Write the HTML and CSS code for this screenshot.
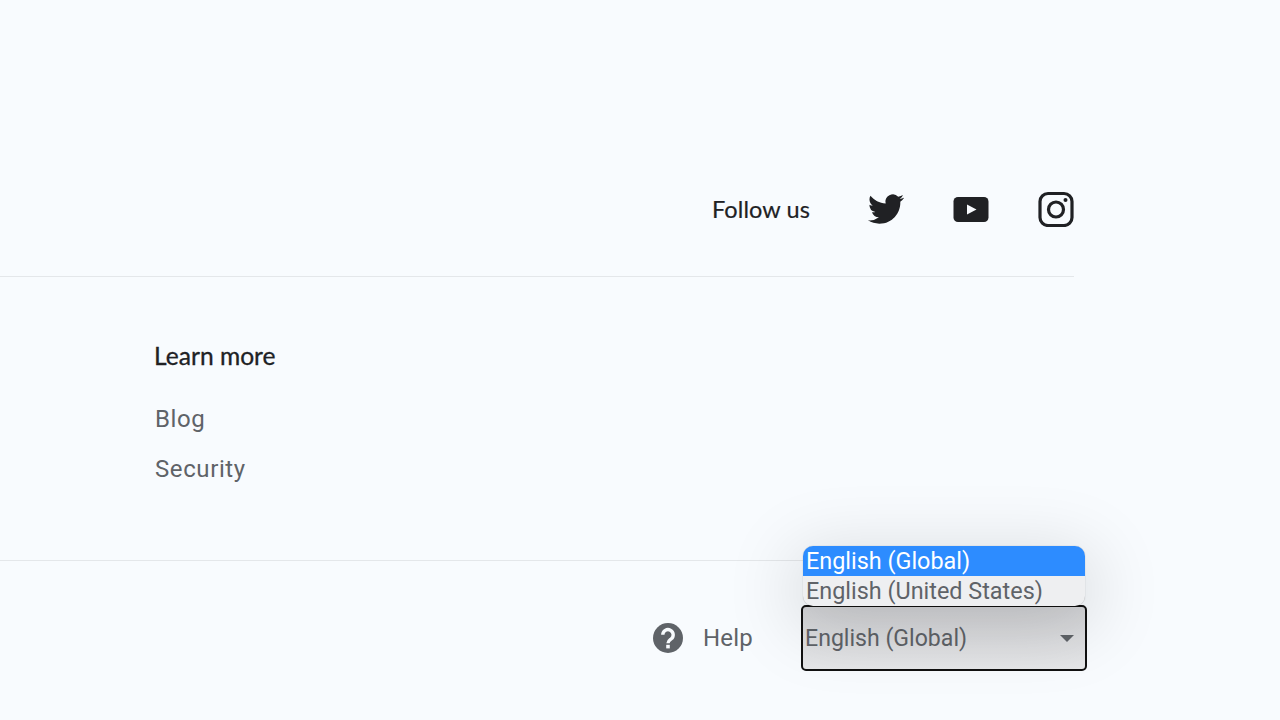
FILE: index.html
```html
<!DOCTYPE html>
<html lang="en">
<head>
    <meta charset="UTF-8">
    <title>Footer</title>
    <link rel="stylesheet" href="styles.css">
</head>
<body>
    <footer class="footer">
        <div class="follow">
            <span class="follow-label">Follow us</span>
            <a class="social" href="#" aria-label="Twitter">
                <svg viewBox="0 0 24 24" width="36" height="36"><path fill="#202124" d="M23.953 4.57a10 10 0 01-2.825.775 4.958 4.958 0 002.163-2.723c-.951.555-2.005.959-3.127 1.184a4.92 4.92 0 00-8.384 4.482C7.69 8.095 4.067 6.13 1.64 3.162a4.822 4.822 0 00-.666 2.475c0 1.71.87 3.213 2.188 4.096a4.904 4.904 0 01-2.228-.616v.06a4.923 4.923 0 003.946 4.827 4.996 4.996 0 01-2.212.085 4.936 4.936 0 004.604 3.417 9.867 9.867 0 01-6.102 2.105c-.39 0-.779-.023-1.17-.067a13.995 13.995 0 007.557 2.209c9.053 0 13.998-7.496 13.998-13.985 0-.21 0-.42-.015-.63A9.935 9.935 0 0024 4.59z"/></svg>
            </a>
            <a class="social" href="#" aria-label="YouTube">
                <svg viewBox="0 0 36 36" width="36" height="36"><rect x="0.5" y="6" width="35" height="25" rx="4.5" fill="#202124"/><path fill="#f8fbfe" d="M14 13.500v10l9.500-5z"/></svg>
            </a>
            <a class="social" href="#" aria-label="Instagram">
                <svg viewBox="0 0 36 36" width="36" height="36" fill="none" stroke="#202124" stroke-width="3.200"><rect x="2" y="2.500" width="32" height="32" rx="8"/><circle cx="18" cy="18.500" r="7.500"/><circle cx="27.500" cy="9" r="2" fill="#202124" stroke="none"/></svg>
            </a>
        </div>

        <div class="links">
            <h3 class="links-title">Learn more</h3>
            <a class="link" href="#">Blog</a>
            <a class="link" href="#">Security</a>
        </div>

        <div class="bottom">
            <a class="help" href="#">
                <svg viewBox="0 0 30 30" width="30" height="30"><circle cx="15" cy="15" r="15" fill="#5f6368"/><path fill="none" stroke="#f8fbfe" stroke-width="3.400" d="M9.800 11.800a5.200 5.200 0 1 1 8.300 4.200c-1.900 1.400-3.100 2-3.100 4.300"/><rect x="13.200" y="21.800" width="3.600" height="3.600" fill="#f8fbfe"/></svg>
                <span>Help</span>
            </a>
            <div class="lang">
                <div class="lang-menu">
                    <div class="lang-option selected">English (Global)</div>
                    <div class="lang-option">English (United States)</div>
                </div>
                <div class="lang-select">
                    <span>English (Global)</span>
                    <span class="arrow"></span>
                </div>
            </div>
        </div>
    </footer>
</body>
</html>
```

FILE: styles.css
```css
* {
    margin: 0;
    padding: 0;
    box-sizing: border-box;
}

html, body {
    height: 100%;
    overflow: hidden;
}

body {
    background: #f8fbfe;
    font-family: Roboto, "Liberation Sans", sans-serif;
    color: #5f6368;
}

a {
    color: inherit;
    text-decoration: none;
}

.follow {
    width: 1074px;
    height: 277px;
    padding-top: 191px;
    display: flex;
    justify-content: flex-end;
    align-items: flex-start;
    gap: 49px;
    border-bottom: 1px solid #e4e7ea;
}

.follow-label {
    font-family: Lato, sans-serif;
    font-size: 23.5px;
    line-height: 36px;
    letter-spacing: 0.1px;
    color: #202124;
    margin-right: 9px;
    -webkit-text-stroke: 0.2px #202124;
}

.social {
    display: block;
    height: 36px;
}

.links {
    height: 284px;
    padding: 66px 0 0 154px;
    border-bottom: 1px solid #e4e7ea;
    width: 1074px;
}

.links-title {
    font-family: Lato, sans-serif;
    font-size: 24.6px;
    font-weight: 400;
    -webkit-text-stroke: 0.3px #202124;
    line-height: 26px;
    color: #202124;
    margin-bottom: 35px;
}

.link {
    display: block;
    margin-left: 1px;
    font-size: 24px;
    line-height: 30px;
    letter-spacing: 0.6px;
    margin-bottom: 20px;
}

.bottom {
    width: 1087px;
    padding-top: 44px;
    display: flex;
    justify-content: flex-end;
    align-items: center;
    gap: 48px;
}

.help {
    display: flex;
    align-items: center;
    gap: 20px;
    font-size: 24px;
    letter-spacing: 0.2px;
}

.lang {
    position: relative;
}

.lang-select {
    width: 286px;
    height: 66px;
    display: flex;
    justify-content: space-between;
    align-items: center;
    padding: 0 11px 0 2px;
    border: 2px solid #111;
    border-radius: 5px;
    background: linear-gradient(#d3d4d7, #e6e7e9);
    font-size: 23.1px;
}

.arrow {
    border-left: 7px solid transparent;
    border-right: 7px solid transparent;
    border-top: 7px solid #5f6368;
}

.lang-menu {
    position: absolute;
    left: 2px;
    bottom: 65px;
    width: 282px;
    border-radius: 10px;
    overflow: hidden;
    background: #eeeff1;
    box-shadow: 0 0 1px rgba(0, 0, 0, 0.35), 0 14px 70px 10px rgba(0, 0, 0, 0.13);
    font-size: 23.4px;
}

.lang-option {
    height: 30px;
    line-height: 30px;
    padding-left: 3px;
}

.lang-option.selected {
    background: #2d8cff;
    color: #fff;
}
```
